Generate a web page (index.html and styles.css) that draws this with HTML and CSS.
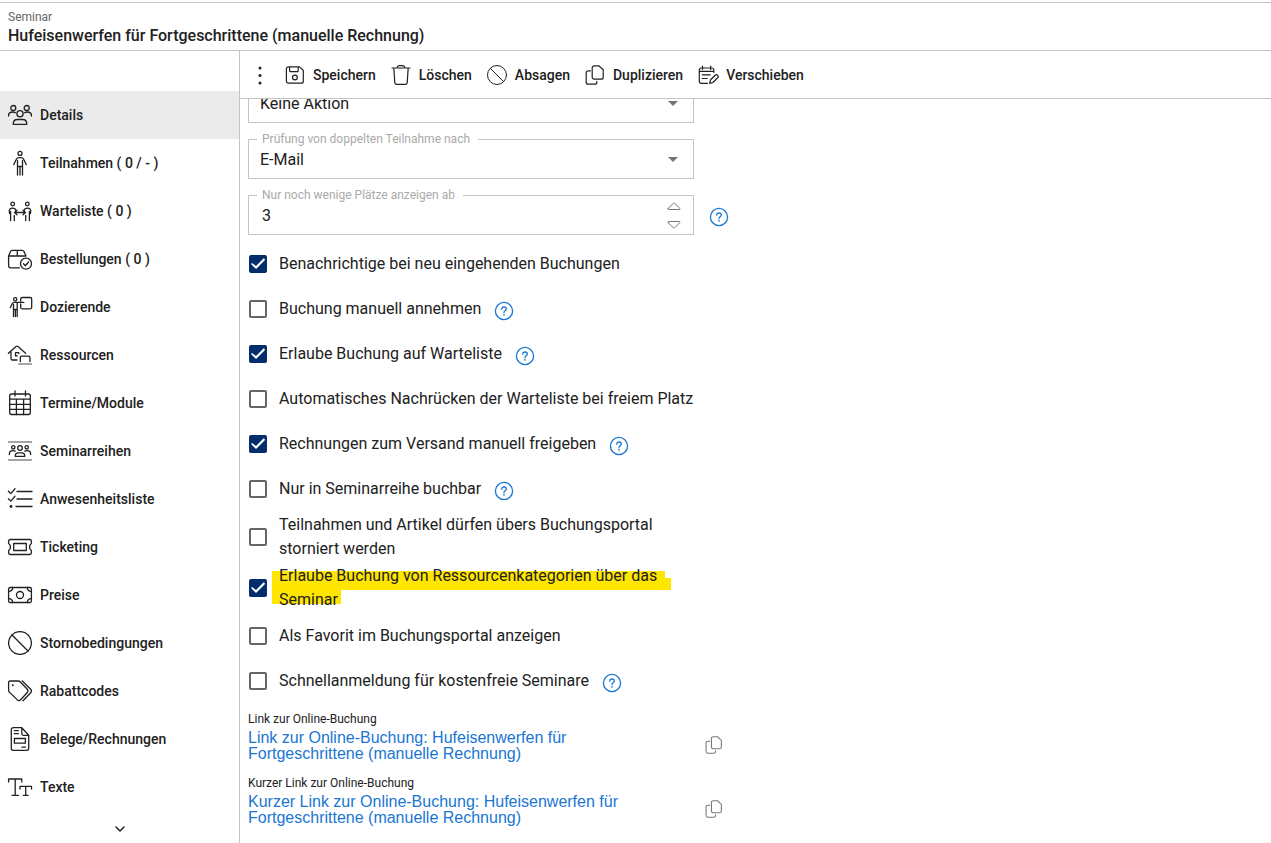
FILE: index.html
```
<!DOCTYPE html>
<html lang="de">
<head>
<meta charset="utf-8">
<meta name="viewport" content="width=device-width, initial-scale=1">
<title>Seminar – Hufeisenwerfen für Fortgeschrittene</title>
<link rel="stylesheet" href="styles.css">
</head>
<body>
<svg class="defs" aria-hidden="true">
  <symbol id="help" viewBox="0 0 20 20"><circle cx="10" cy="10" r="8.6"/><path d="M7.700 8.200c0-1.400 1-2.200 2.300-2.200s2.300.8 2.300 2c0 1.700-2.300 1.700-2.300 3.400M10 13.200v1"/></symbol>
  <symbol id="copy" viewBox="0 0 20 20"><path d="M9.200.8h4.600l4.400 4v7.400a2 2 0 0 1-2 2h-7a2 2 0 0 1-2-2V2.800a2 2 0 0 1 2-2zM5.400 5.800H3.200a2 2 0 0 0-2 2v9.400a2 2 0 0 0 2 2h6.600a2 2 0 0 0 2-2v-.8"/></symbol>
  <symbol id="ban" viewBox="0 0 24 24"><circle cx="12" cy="12" r="11.400"/><path d="M4 4l16 16"/></symbol>
</svg>

<header class="page-head">
  <span class="kicker">Seminar</span>
  <h1>Hufeisenwerfen für Fortgeschrittene (manuelle Rechnung)</h1>
</header>

<div class="body">
  <nav class="side" aria-label="Seminar">
    <a class="tab active" href="#details"><svg class="icon" viewBox="0 0 24 24"><circle cx="5.300" cy="5" r="2.500"/><circle cx="18.700" cy="5" r="2.500"/><circle cx="12" cy="10.700" r="3.100"/><path d="M.5 13C.5 10.300 2.300 9 4.700 9c1.100 0 2 .2 2.700.7M23.500 13c0-2.700-1.800-4-4.200-4-1.100 0-2 .2-2.700.7M5.200 21.300h13.600c0-3-1.800-4.800-4.300-4.800h-5c-2.500 0-4.300 1.800-4.300 4.800z"/></svg>Details</a>
    <a class="tab" href="#teilnahmen"><svg class="icon" viewBox="0 0 24 24"><circle cx="12" cy="2.400" r="2"/><path d="M5.800 13.600L8 8.800c.6-1.500 1.400-2.200 2.800-2.200h2.400c1.400 0 2.200.7 2.800 2.200l2.200 4.800M9.500 9.500V24M14.500 9.500V24M12 15.500V24M9.500 15.500h5"/></svg>Teilnahmen ( 0 / - )</a>
    <a class="tab" href="#warteliste"><svg class="icon" viewBox="0 0 24 24"><circle cx="4.700" cy="5" r="1.800"/><circle cx="19.300" cy="5" r="1.800"/><path d="M2.600 21.500v-6.300c-1.200-.6-1.400-1.500-1.400-2.700 0-2.200 1.200-3.400 3.300-3.400 1.900 0 3.100.8 3.400 2.500M6.300 21.500v-5M2.600 16.500v-4M21.400 21.500v-6.300c1.200-.6 1.400-1.500 1.400-2.700 0-2.200-1.200-3.400-3.300-3.400-1.900 0-3.100.8-3.400 2.500M17.700 21.500v-5M21.400 16.500v-4M6.500 13.500h11M9 11.200l-2.500 2.300L9 15.800M15 11.200l2.500 2.300-2.500 2.300"/></svg>Warteliste ( 0 )</a>
    <a class="tab" href="#bestellungen"><svg class="icon" viewBox="0 0 24 24"><path d="M11.500 20.800H2.600a2 2 0 0 1-2-2V9l1.900-4.400c.4-.9.900-1.200 1.800-1.200h9.900c.9 0 1.400.3 1.800 1.200L18 9M.6 9H18M9.300 3.500V9"/><circle cx="18" cy="16.700" r="5.500"/><path d="M15.500 16.800l1.800 1.900 3.300-3.700"/></svg>Bestellungen ( 0 )</a>
    <a class="tab" href="#dozierende"><svg class="icon" viewBox="0 0 24 24"><circle cx="7.200" cy="4.200" r="1.600"/><path d="M2.300 12.500l2-4c.5-.9 1-1.200 1.900-1.200h9.600M5.500 9.500v12M9.200 7.500v14M7.400 14.500v7M5.500 14.500h3.700M12.700 6V4a1.500 1.500 0 0 1 1.500-1.500h8A1.500 1.500 0 0 1 23.700 4v8.300a1.500 1.500 0 0 1-1.500 1.500h-8a1.500 1.500 0 0 1-1.500-1.500V9"/></svg>Dozierende</a>
    <a class="tab" href="#ressourcen"><svg class="icon" viewBox="0 0 24 24"><path d="M.4 10.300L8 3.600c.7-.6 1.300-.6 2 0l7.600 6.700M3 9v6.400A1.600 1.600 0 0 0 4.600 17H9M10.800 10.500V9.700H7.500v3.200h1.800M12.300 18.500v-4a1.400 1.400 0 0 1 1.400-1.400h6.800a1.400 1.400 0 0 1 1.400 1.400v4"/><path class="soft" d="M10.300 21H24"/></svg>Ressourcen</a>
    <a class="tab" href="#termine"><svg class="icon" viewBox="0 0 24 24"><rect x="1.700" y="3" width="20.600" height="20.500" rx="2"/><path d="M7 0v5M17.500 0v5M1.700 8.200h20.600M1.700 13.300h20.600M1.700 18.400h20.600M8.400 8.200v15.300M15.600 8.200v15.300"/></svg>Termine/Module</a>
    <a class="tab" href="#seminarreihen"><svg class="icon" viewBox="0 0 24 24"><path class="soft" d="M0 3h24M0 21h24"/><circle cx="5.300" cy="8.300" r="1.700"/><circle cx="18.700" cy="8.300" r="1.700"/><circle cx="12" cy="9" r="2.300"/><path d="M1.300 15.500c0-2.700 1.200-3.800 3.700-3.800.9 0 1.500.2 2.200.5M22.700 15.500c0-2.700-1.200-3.800-3.700-3.800-.9 0-1.500.2-2.200.5M7.200 17.300h9.600c0-2.200-1.100-3.400-3-3.400h-3.600c-1.900 0-3 1.200-3 3.400z"/></svg>Seminarreihen</a>
    <a class="tab" href="#anwesenheit"><svg class="icon" viewBox="0 0 24 24"><path d="M9 4.500h15M9 12h15M8 19.500h16M.4 4.300l2.400 2.300L7 1.800M.4 11.800l2.400 2.300L7 9.300"/><circle class="dot" cx="3" cy="19.500" r="1.400"/></svg>Anwesenheitsliste</a>
    <a class="tab" href="#ticketing"><svg class="icon" viewBox="0 0 24 24"><path d="M2.400 4.500h19.200c1.200 0 1.800.6 1.800 1.700v2.200l-1.700 2v3.200l1.700 2v2.200c0 1.100-.6 1.700-1.800 1.700H2.400c-1.200 0-1.800-.6-1.800-1.700v-2.200l1.700-2v-3.200l-1.700-2V6.200c0-1.100.6-1.700 1.800-1.700z"/><rect x="5.700" y="8.500" width="12.600" height="7"/></svg>Ticketing</a>
    <a class="tab" href="#preise"><svg class="icon" viewBox="0 0 24 24"><rect x=".6" y="4.500" width="22.800" height="15" rx="1.500"/><circle cx="12" cy="12" r="3.500"/><path d="M4.700 4.500c0 2.300-1.500 3.800-4 3.800M19.300 4.500c0 2.300 1.500 3.800 4 3.800M4.700 19.500c0-2.300-1.500-3.800-4-3.800M19.300 19.500c0-2.300 1.500-3.800 4-3.800"/></svg>Preise</a>
    <a class="tab" href="#storno"><svg class="icon"><use href="#ban"/></svg>Stornobedingungen</a>
    <a class="tab" href="#rabatt"><svg class="icon" viewBox="0 0 24 24"><path d="M2.100 2h8c.8 0 1.400.2 2 .8l7 7.200c1.200 1.300 1.200 2.500 0 3.800l-6.500 7c-1.100 1.200-2 1.200-3.200.1L1.600 13.400C.9 12.800.6 12.200.6 11.300V3.500C.6 2.500 1.100 2 2.100 2zM14.300 2l8.400 8.200c1.100 1.200 1.100 2.300 0 3.500L15 21.800"/><circle class="dot" cx="4.800" cy="6.300" r="1"/></svg>Rabattcodes</a>
    <a class="tab" href="#belege"><svg class="icon" viewBox="0 0 24 24"><path d="M5.300.7h8.500l6.900 7.600v13a2 2 0 0 1-2 2H5.300a2 2 0 0 1-2-2V2.700a2 2 0 0 1 2-2zM13.800.7v6.100c0 1 .5 1.500 1.500 1.500h5.400M6.300 3.700h4M6.300 6.700h4M14 20.200h3.500"/><rect x="6.400" y="11.500" width="11" height="4.700"/></svg>Belege/Rechnungen</a>
    <a class="tab" href="#texte"><svg class="icon" viewBox="0 0 24 24"><path d="M.6 7V4h13.200v3M7.200 4v16M4 20.300h6.400M12 14v-2.700h11.500V14M17.700 11.300v9M15.300 20.300h4.800"/></svg>Texte</a>
    <button class="more" type="button" aria-label="Weitere Einträge"><svg class="chevron" viewBox="0 0 12 12"><path d="M2 4l4 4 4-4"/></svg></button>
  </nav>

  <main class="main">
    <div class="toolbar" role="toolbar">
      <button class="dots" type="button" aria-label="Menü"><svg viewBox="0 0 20 20"><circle cx="10" cy="3" r="1.500"/><circle cx="10" cy="10.500" r="1.500"/><circle cx="10" cy="18" r="1.500"/></svg></button>
      <button class="tool" type="button"><svg class="icon" viewBox="0 0 20 20"><path d="M3.400 1.800h11.200l3.700 3.700v10.700a2 2 0 0 1-2 2H3.400a2 2 0 0 1-2-2V3.800a2 2 0 0 1 2-2zM4.600 2v3.700a1 1 0 0 0 1 1h6.600a1 1 0 0 0 1-1V2"/><circle cx="9.900" cy="12.500" r="2.400"/></svg>Speichern</button>
      <button class="tool" type="button"><svg class="icon" viewBox="0 0 20 20"><path d="M1 3h18M6 3c.3-1.600.9-2.300 2.300-2.300h3.400C13.100.7 13.700 1.400 14 3M2.800 3l1 14.600c.1 1.200.8 1.800 2 1.800h8.400c1.200 0 1.900-.6 2-1.800l1-14.600"/></svg>Löschen</button>
      <button class="tool" type="button"><svg class="icon"><use href="#ban"/></svg>Absagen</button>
      <button class="tool" type="button"><svg class="icon"><use href="#copy"/></svg>Duplizieren</button>
      <button class="tool" type="button"><svg class="icon" viewBox="0 0 20 20"><path d="M1.300 6.400h14.500M9.500 18.300H3.300a2 2 0 0 1-2-2V5a2 2 0 0 1 2-2h10.500a2 2 0 0 1 2 2v2.500M4.500 1v3.500M12.700 1v3.500M4.200 9.800h8M4.200 13.500h5M11.700 18.300l.7-3.300 5-5c.6-.6 1.200-.6 1.800 0l.7.700c.6.600.6 1.200 0 1.800l-5 5z"/></svg>Verschieben</button>
    </div>

    <div class="scroll">
      <form class="form">
        <div class="field">
          <div class="control">
            <select aria-label="Aktion"><option>Keine Aktion</option></select>
          </div>
        </div>
        <div class="field">
          <div class="control">
            <label for="pruefung">Prüfung von doppelten Teilnahme nach</label>
            <select id="pruefung"><option>E-Mail</option></select>
          </div>
        </div>
        <div class="field">
          <div class="control">
            <label for="plaetze">Nur noch wenige Plätze anzeigen ab</label>
            <input id="plaetze" type="text" inputmode="numeric" value="3">
            <span class="spin">
              <button type="button" aria-label="Erhöhen"><svg viewBox="0 0 14 9"><path d="M1.200 6.300L6.300 1.400c.5-.5.9-.5 1.400 0l5.100 4.900c.5.700.2 1.200-.5 1.200H1.700c-.7 0-1-.5-.5-1.200z"/></svg></button>
              <button type="button" aria-label="Verringern"><svg viewBox="0 0 14 9"><path d="M1.200 2.700l5.100 4.900c.5.500.9.500 1.400 0l5.100-4.900c.5-.7.200-1.200-.5-1.200H1.700c-.7 0-1 .5-.5 1.200z"/></svg></button>
            </span>
          </div>
          <button class="help field-help" type="button" aria-label="Hilfe"><svg><use href="#help"/></svg></button>
        </div>

        <div class="checks">
          <div class="check"><input type="checkbox" id="c1" checked><label for="c1">Benachrichtige bei neu eingehenden Buchungen</label></div>
          <div class="check"><input type="checkbox" id="c2"><label for="c2">Buchung manuell annehmen</label><button class="help" type="button" aria-label="Hilfe"><svg><use href="#help"/></svg></button></div>
          <div class="check"><input type="checkbox" id="c3" checked><label for="c3">Erlaube Buchung auf Warteliste</label><button class="help" type="button" aria-label="Hilfe"><svg><use href="#help"/></svg></button></div>
          <div class="check"><input type="checkbox" id="c4"><label for="c4">Automatisches Nachrücken der Warteliste bei freiem Platz</label></div>
          <div class="check"><input type="checkbox" id="c5" checked><label for="c5">Rechnungen zum Versand manuell freigeben</label><button class="help" type="button" aria-label="Hilfe"><svg><use href="#help"/></svg></button></div>
          <div class="check"><input type="checkbox" id="c6"><label for="c6">Nur in Seminarreihe buchbar</label><button class="help" type="button" aria-label="Hilfe"><svg><use href="#help"/></svg></button></div>
          <div class="check"><input type="checkbox" id="c7"><label for="c7">Teilnahmen und Artikel dürfen übers Buchungsportal storniert werden</label></div>
          <div class="check"><input type="checkbox" id="c8" checked><label for="c8" class="marked"><svg class="marker" viewBox="0 0 400 34" aria-hidden="true"><path d="M0 0h393v7h6v12H69v14H0z"/></svg>Erlaube Buchung von Ressourcenkategorien über das Seminar</label></div>
          <div class="check"><input type="checkbox" id="c9"><label for="c9">Als Favorit im Buchungsportal anzeigen</label></div>
          <div class="check"><input type="checkbox" id="c10"><label for="c10">Schnellanmeldung für kostenfreie Seminare</label><button class="help" type="button" aria-label="Hilfe"><svg><use href="#help"/></svg></button></div>
        </div>

        <div class="link-row">
          <div class="link-text">
            <span class="caption">Link zur Online-Buchung</span>
            <a href="#buchung">Link zur Online-Buchung: Hufeisenwerfen für Fortgeschrittene (manuelle Rechnung)</a>
          </div>
          <button class="copy" type="button" aria-label="Link kopieren"><svg><use href="#copy"/></svg></button>
        </div>
        <div class="link-row">
          <div class="link-text">
            <span class="caption">Kurzer Link zur Online-Buchung</span>
            <a href="#kurz">Kurzer Link zur Online-Buchung: Hufeisenwerfen für Fortgeschrittene (manuelle Rechnung)</a>
          </div>
          <button class="copy" type="button" aria-label="Kurzen Link kopieren"><svg><use href="#copy"/></svg></button>
        </div>
      </form>
    </div>
  </main>
</div>
</body>
</html>
```

FILE: styles.css
```
* { box-sizing: border-box; }

body {
  margin: 0;
  height: 100vh;
  display: flex;
  flex-direction: column;
  overflow: hidden;
  background: #fff;
  color: #212121;
  font: 400 16px/24px Roboto, "Liberation Sans", sans-serif;
}

button, input, select { font: inherit; color: inherit; }

button {
  padding: 0;
  border: 0;
  background: none;
  cursor: pointer;
}

svg {
  display: block;
  fill: none;
  stroke: currentColor;
  stroke-linecap: round;
  stroke-linejoin: round;
}

.defs { position: absolute; width: 0; height: 0; }

/* Header */
.page-head {
  margin-top: 2px;
  padding: 6px 8px 3px;
  border-top: 1px solid #c4c4c4;
  border-bottom: 1px solid #c4c4c4;
}

.kicker {
  display: block;
  font-size: 12px;
  line-height: 16px;
  color: #666;
}

.page-head h1 {
  margin: 0;
  font-size: 16px;
  line-height: 22px;
  font-weight: 500;
}

.body { flex: 1; display: flex; min-height: 0; }

/* Side navigation */
.side {
  flex: none;
  width: 240px;
  padding-top: 40px;
  display: flex;
  flex-direction: column;
  border-right: 1px solid #c4c4c4;
}

.tab {
  display: flex;
  align-items: center;
  gap: 8px;
  height: 48px;
  flex: none;
  padding: 0 8px;
  color: inherit;
  text-decoration: none;
  font-size: 14px;
  font-weight: 500;
}

.tab.active { background: #ebebeb; }
.tab .icon { width: 24px; height: 24px; stroke-width: 1.3; flex: none; overflow: visible; }
.icon .soft { stroke: #888; stroke-width: 1.5; stroke-linecap: butt; }
.icon .dot { fill: currentColor; stroke: none; }

.more { flex: 1; display: grid; place-items: center; padding-top: 4px; }
.chevron { width: 12px; height: 12px; stroke-width: 1.5; }

/* Toolbar */
.main { flex: 1; min-width: 0; display: flex; flex-direction: column; }

.toolbar {
  flex: none;
  height: 48px;
  padding: 0 10px;
  display: flex;
  align-items: center;
  gap: 15px;
  border-bottom: 1px solid #c4c4c4;
}

.tool {
  display: flex;
  align-items: center;
  gap: 8px;
  font-size: 14px;
  font-weight: 500;
}

.tool .icon { width: 20px; height: 20px; stroke-width: 1.2; overflow: visible; }
.dots svg { width: 20px; height: 20px; fill: currentColor; stroke: none; }

/* Form */
.scroll { flex: 1; min-height: 0; overflow: hidden; }

.form {
  max-width: 498px;
  margin-top: -16px;
  padding: 0 8px;
}

.field {
  display: flex;
  align-items: center;
  gap: 15px;
  margin-bottom: 16px;
}

.control {
  position: relative;
  flex: 0 1 446px;
  height: 40px;
  border: 1px solid #c4c4c4;
}

.control label {
  position: absolute;
  top: -9px;
  left: 8px;
  padding: 0 8px 0 5px;
  background: #fff;
  color: #aaa;
  font-size: 12px;
  line-height: 16px;
}

.control select, .control input {
  width: 100%;
  height: 100%;
  padding: 1px 40px 0 11px;
  border: 0;
  background: none;
  outline: 0;
  appearance: none;
}

.control input { padding-left: 13px; }

.control:has(select)::after {
  content: "";
  position: absolute;
  right: 15px;
  top: 17px;
  border: 5px solid transparent;
  border-top-color: #757575;
  border-bottom: 0;
  pointer-events: none;
}

.spin {
  position: absolute;
  right: 12px;
  top: 6px;
  display: grid;
  gap: 9px;
}

.spin svg { width: 14px; height: 9px; color: #777; }

.help { flex: none; color: #1976d2; }
.help svg { width: 20px; height: 20px; stroke-width: 1.3; }
.field-help { margin-top: 4px; }

/* Check list */
.checks {
  display: grid;
  gap: 3px;
  margin-top: -8px;
}

.check {
  display: flex;
  align-items: center;
  min-height: 42px;
}

.check label { max-width: 424px; margin-left: 12px; }
.check .help { margin: 4px 0 0 13px; }

.check input {
  flex: none;
  appearance: none;
  width: 18px;
  height: 18px;
  margin: 0 0 0 1px;
  border: 2px solid #666;
  border-radius: 2px;
}

.check input:checked { border: 0; background: #032d6b; }

.check input:checked::before {
  content: "";
  display: block;
  height: 18px;
  background: #fff;
  clip-path: polygon(7px 14px, 2px 9px, 3px 8px, 7px 11px, 15px 3px, 16px 5px);
}

.marked { position: relative; z-index: 0; }

.marker {
  position: absolute;
  z-index: -1;
  left: -7px;
  top: 7px;
  width: 400px;
  height: 34px;
  fill: #ffe600;
  stroke: none;
}

/* Booking links */
.link-row {
  display: flex;
  align-items: center;
  gap: 11px;
  min-height: 64px;
}

.checks + .link-row { margin-top: 2px; }

.link-text { flex: 0 1 446px; display: grid; gap: 3px; }

.caption { font-size: 12px; line-height: 16px; }

.link-text a {
  width: fit-content;
  max-width: 384px;
  color: #1976d2;
  text-decoration: none;
  font-family: "Liberation Sans", Arial, sans-serif;
  line-height: 16px;
}

.copy { margin-top: 18px; color: #777; }
.copy svg { width: 18px; height: 18px; stroke-width: 1.2; }
```
